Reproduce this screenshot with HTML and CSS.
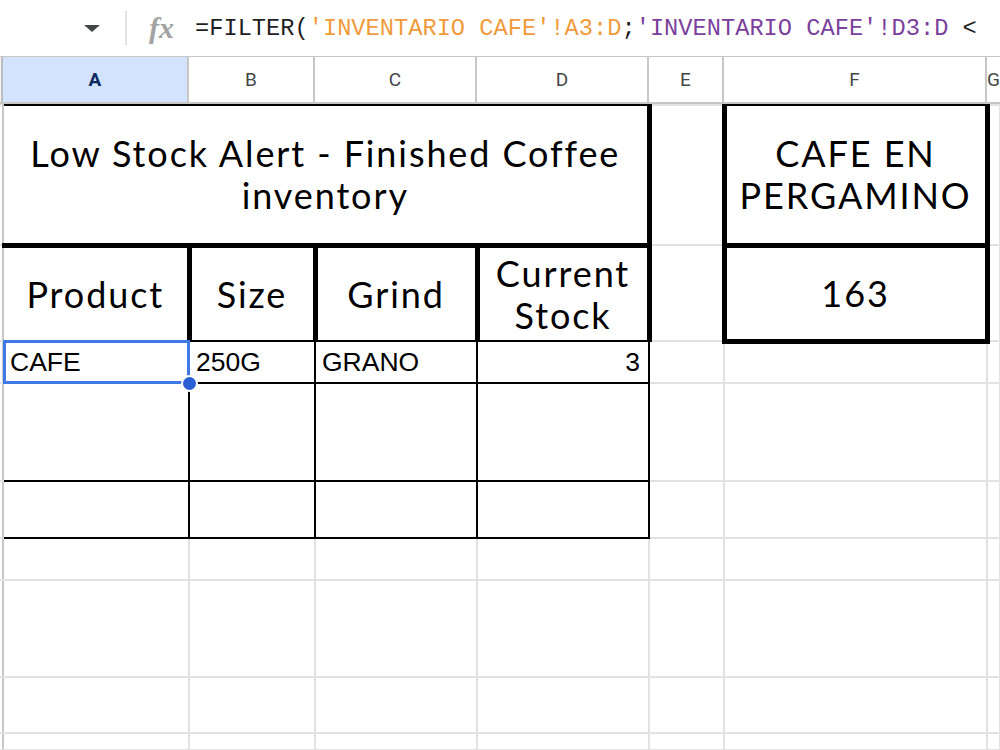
FILE: index.html
```html
<!DOCTYPE html>
<html lang="es">
<head>
    <meta charset="UTF-8">
    <meta name="viewport" content="width=device-width, initial-scale=1.0">
    <title>Low Stock Alert</title>
    <link rel="stylesheet" href="styles.css">
</head>
<body>
    <div class="formula-bar">
        <div class="name-box"><span class="caret"></span></div>
        <div class="divider"></div>
        <span class="fx">fx</span>
        <div class="formula">=FILTER(<span class="ref-a">'INVENTARIO CAFE'!A3:D</span>;<span class="ref-b">'INVENTARIO CAFE'!D3:D</span> &lt;</div>
    </div>

    <div class="col-headers">
        <div class="col-head corner"></div>
        <div class="col-head active">A</div>
        <div class="col-head">B</div>
        <div class="col-head">C</div>
        <div class="col-head">D</div>
        <div class="col-head">E</div>
        <div class="col-head">F</div>
        <div class="col-head">G</div>
    </div>

    <table class="sheet">
        <colgroup>
            <col class="w-stub">
            <col class="w-a">
            <col class="w-b">
            <col class="w-c">
            <col class="w-d">
            <col class="w-e">
            <col class="w-f">
            <col class="w-g">
        </colgroup>
        <tr class="r1">
            <td class="stub"></td>
            <td class="title" colspan="4">Low Stock Alert - Finished Coffee<br>inventory</td>
            <td></td>
            <td class="box box-top">CAFE EN<br>PERGAMINO</td>
            <td></td>
        </tr>
        <tr class="r2">
            <td class="stub"></td>
            <td class="hd first">Product</td>
            <td class="hd">Size</td>
            <td class="hd">Grind</td>
            <td class="hd">Current<br>Stock</td>
            <td></td>
            <td class="box box-bottom">163</td>
            <td></td>
        </tr>
        <tr class="r3">
            <td class="stub"></td>
            <td class="cell selected">CAFE<div class="selection"></div><div class="handle"></div></td>
            <td class="cell">250G</td>
            <td class="cell">GRANO</td>
            <td class="cell num">3</td>
            <td></td>
            <td></td>
            <td></td>
        </tr>
        <tr class="r4">
            <td class="stub"></td>
            <td class="cell"></td>
            <td class="cell"></td>
            <td class="cell"></td>
            <td class="cell"></td>
            <td></td>
            <td></td>
            <td></td>
        </tr>
        <tr class="r5">
            <td class="stub"></td>
            <td class="cell"></td>
            <td class="cell"></td>
            <td class="cell"></td>
            <td class="cell"></td>
            <td></td>
            <td></td>
            <td></td>
        </tr>
        <tr class="r6">
            <td class="stub"></td>
            <td></td><td></td><td></td><td></td><td></td><td></td><td></td>
        </tr>
        <tr class="r7">
            <td class="stub"></td>
            <td></td><td></td><td></td><td></td><td></td><td></td><td></td>
        </tr>
        <tr class="r8">
            <td class="stub"></td>
            <td></td><td></td><td></td><td></td><td></td><td></td><td></td>
        </tr>
        <tr class="r9">
            <td class="stub"></td>
            <td></td><td></td><td></td><td></td><td></td><td></td><td></td>
        </tr>
    </table>
</body>
</html>
```

FILE: styles.css
```css
body {
    margin: 0;
    width: 1000px;
    height: 750px;
    overflow: hidden;
    background: #fff;
    font-family: "Liberation Sans", Arial, sans-serif;
    color: #000;
}

/* formula bar */
.formula-bar {
    height: 56px;
    display: flex;
    align-items: center;
    border-bottom: 1px solid #c7c7c7;
    white-space: nowrap;
    overflow: hidden;
}
.name-box {
    width: 125px;
    display: flex;
    justify-content: flex-end;
    padding-right: 25px;
    box-sizing: border-box;
}
.caret {
    width: 0;
    height: 0;
    border-left: 8px solid transparent;
    border-right: 8px solid transparent;
    border-top: 7px solid #444746;
}
.divider {
    width: 2px;
    height: 34px;
    background: #e3e3e3;
}
.fx {
    margin-left: 22px;
    font-family: "Liberation Serif", serif;
    font-style: italic;
    font-weight: bold;
    font-size: 30px;
    color: #a3a3a3;
}
.formula {
    margin-left: 21px;
    font-family: "Liberation Mono", monospace;
    font-size: 23.7px;
    color: #1f1f1f;
}
.ref-a {
    color: #ef9b3b;
}
.ref-b {
    color: #7b3f9c;
}

/* column headers */
.col-headers {
    display: grid;
    grid-template-columns: 3px 186px 126px 162px 172px 75px 263px 1fr;
    height: 47px;
    border-bottom: 2px solid #c7c7c7;
    box-sizing: border-box;
}
.col-head {
    display: flex;
    align-items: center;
    justify-content: center;
    border-right: 2px solid #c7c7c7;
    font-family: Roboto, "Liberation Sans", sans-serif;
    font-size: 19px;
    color: #444746;
}
.col-head.corner {
    border-right: 2px solid #bdbdbd;
    background: #f1f3f4;
}
.col-head.active {
    background: #d3e3fd;
    color: #0b2a62;
    font-weight: bold;
}

/* grid */
.sheet {
    border-collapse: collapse;
    table-layout: fixed;
    width: 1000px;
}
.w-stub { width: 3px; }
.w-a { width: 186px; }
.w-b { width: 126px; }
.w-c { width: 162px; }
.w-d { width: 172px; }
.w-e { width: 75px; }
.w-f { width: 263px; }
.w-g { width: 13px; }

.sheet td {
    border: 2px solid #e2e2e2;
    padding: 0;
}
.sheet td.stub {
    border-left: none;
    border-right: 2px solid #c7c7c7;
}

.r1 { height: 140px; }
.r2 { height: 96px; }
.r3 { height: 42px; }
.r4 { height: 98px; }
.r5 { height: 57px; }
.r6 { height: 42px; }
.r7 { height: 97px; }
.r8 { height: 56px; }
.r9 { height: 17px; }

.title,
.hd,
.box {
    font-family: Lato, "Open Sans", sans-serif;
    font-size: 36px;
    line-height: 42px;
    letter-spacing: 1.9px;
    text-align: center;
    vertical-align: middle;
    white-space: nowrap;
}
.sheet td.title {
    border: 5px solid #000;
    border-top-width: 2px;
    border-left-width: 2px;
}
.sheet td.hd {
    border: 5px solid #000;
    border-bottom-width: 2px;
}
.sheet td.hd.first {
    border-left-width: 2px;
}
.sheet td.box {
    border: 5px solid #000;
}
.sheet td.box-top {
    border-top-width: 2px;
}

.sheet td.cell {
    border: 2px solid #000;
    padding: 0 6px;
    font-size: 26.5px;
    vertical-align: middle;
    white-space: nowrap;
}
.sheet td.num {
    text-align: right;
    padding-right: 8px;
}

/* active cell */
.sheet td.selected {
    position: relative;
}
.selection {
    position: absolute;
    top: -2px;
    left: -1px;
    right: -2px;
    bottom: -2px;
    border: 3px solid #3f79e6;
}
.handle {
    position: absolute;
    right: -10px;
    bottom: -10px;
    width: 13px;
    height: 13px;
    border-radius: 50%;
    background: #2a5fd3;
    border: 2px solid #fff;
    z-index: 2;
}
```
